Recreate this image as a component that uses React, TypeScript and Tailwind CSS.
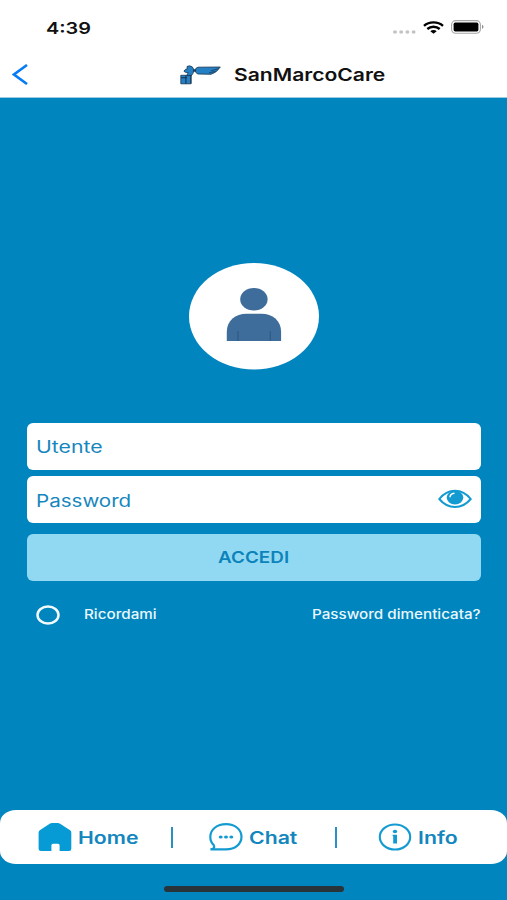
import React, { useState } from "react";

const Label = ({ box, className, children }: { box: string; className: string; children: string }) => (
  <span className={`block shrink-0 whitespace-nowrap ${box}`}>
    <span className={`block w-max origin-left ${className}`}>{children}</span>
  </span>
);

const StatusBar = () => (
  <div className="flex h-[54px] items-center justify-between pl-[46px] pr-[23.5px] text-[#111]">
    <Label box="w-[46px] pt-px" className="scale-x-[1.24] text-[16px] font-semibold">
      4:39
    </Label>
    <div className="flex items-center">
      <svg className="mt-[9px] mr-[7px] h-[4px] w-[23px]" viewBox="0 0 23 4" fill="#c4c4c4">
        <ellipse cx="2" cy="2" rx="2" ry="1.7" />
        <ellipse cx="8.2" cy="2" rx="2" ry="1.7" />
        <ellipse cx="14.4" cy="2" rx="2" ry="1.7" />
        <ellipse cx="20.6" cy="2" rx="2" ry="1.7" />
      </svg>
      <svg
        className="mr-[7px] h-[13px] w-[21px]"
        viewBox="0 0 21 13"
        fill="none"
        stroke="#000"
        strokeWidth="2.4">
        <path d="M1 4.8C6.2 0.2 14.8 0.2 20 4.8" />
        <path d="M4.3 8C7.8 5 13.2 5 16.7 8" />
        <path d="M7.3 10.2C9 8.7 12 8.7 13.7 10.2L10.5 12.8Z" fill="#000" stroke="none" />
      </svg>
      <svg className="h-[14px] w-[33px]" viewBox="0 0 33 14">
        <rect x="0.6" y="0.6" width="28.8" height="12.6" rx="4" fill="#fff" stroke="#a6a6a6" strokeWidth="1.1" />
        <rect x="2.6" y="2.6" width="24.8" height="8.8" rx="1.6" fill="#000" />
        <path d="M31 4.8C33 5.6 33 8 31 8.8Z" fill="#8f8f8f" />
      </svg>
    </div>
  </div>
);

const Logo = () => (
  <svg className="mb-[2px] h-[20px] w-[41px]" viewBox="0 0 41 20" fill="#247fc4" stroke="#17334e" strokeWidth="0.8">
    <path d="M0.8 10.3H10.8V18.8H0.8Z" />
    <path d="M3.9 6.2L5.6 4.3L7.2 4L7 1.5L9.5 0.8L12.2 1.8L13.7 4.2L13.3 7.8L11.5 10.5H6.8L8.2 7.6L5.4 7.3Z" />
    <path d="M5.9 10.5V18.8M1 12.8H7M11 10V18.8" fill="none" strokeWidth="1.1" />
    <path d="M13.3 5.5H16" strokeWidth="2.4" />
    <path d="M15.8 3.4L18 2.2L40.3 2L38 4.8L36.5 6.4L34 7.9L31 9.3L17.5 9L15.4 6.8Z" />
    <path d="M31 5.8L38.5 3.7M29 7.8L35.5 6.4" fill="none" strokeWidth="0.7" />
  </svg>
);

const Header = () => (
  <header className="h-[98px] border-b border-[#9fcbe1] bg-white">
    <StatusBar />
    <div className="flex h-[43px] items-center">
      <svg className="mb-[2px] ml-[12px] h-[21px] w-[17px]" viewBox="0 0 17 21" fill="none" stroke="#087cf7" strokeWidth="2.6">
        <path d="M15 1L2 10.5L15 20" />
      </svg>
      <div className="ml-[150.5px] flex items-center">
        <Logo />
        <Label box="ml-[13px] w-[152px] pt-px" className="scale-x-[1.24] text-[17px] font-semibold text-[#111]">
          SanMarcoCare
        </Label>
      </div>
    </div>
  </header>
);

const Avatar = () => (
  <svg className="mx-auto block h-[107px] w-[130px]" viewBox="0 0 130 107">
    <ellipse cx="65" cy="53.3" rx="65" ry="53.3" fill="#fff" />
    <g fill="#3f6d9b">
      <ellipse cx="64.9" cy="36.3" rx="13.7" ry="11.3" />
      <path d="M37.8 78V68.7C37.8 57.7 46.5 50.8 57.5 50.8H72.5C83.5 50.8 92.1 57.7 92.1 68.7V78Z" />
    </g>
    <path d="M49 68V78M81.2 68V78" stroke="#28577f" strokeWidth="1" />
  </svg>
);

const EyeIcon = () => (
  <svg className="h-[20px] w-[34px]" viewBox="0 0 34 20">
    <path
      d="M1.3 10C5.5 4.6 10.5 1.7 17 1.7S28.5 4.6 32.7 10C28.5 15.1 23.5 18 17 18S5.5 15.1 1.3 10Z"
      fill="#fff"
      stroke="#139bd1"
      strokeWidth="2"
    />
    <ellipse cx="17" cy="8.6" rx="8.3" ry="6.8" fill="#139bd1" />
    <path d="M12 8.3C12 5.9 13.8 4.5 16.5 4.2" fill="none" stroke="#fff" strokeWidth="1.5" />
  </svg>
);

const HomeIcon = () => (
  <svg className="h-[28px] w-[34px]" viewBox="0 0 34 28" fill="#079bd5">
    <path d="M1.8 7.2L11.3 0.9Q12.6 0 14.2 0H19.6Q21.2 0 22.5 0.9L32.1 7.2Q33.3 8.1 33.3 9.8V25.8Q33.3 28 31 28H21.6V22.3Q21.6 20.8 20 20.8H15Q13.4 20.8 13.4 22.3V28H3Q0.6 28 0.6 25.8V9.8Q0.6 8.1 1.8 7.2Z" />
  </svg>
);

const ChatIcon = () => (
  <svg className="h-[28px] w-[34px]" viewBox="0 0 34 28" fill="none" stroke="#139bd1" strokeWidth="2.2">
    <path d="M1.5 26.4C4.8 25.8 6 24.3 4.8 22.2C2.3 20 1.3 17 1.3 13.8C1.3 6.5 8 1.2 17 1.2S32.5 6.5 32.5 13.8S26 26.4 17 26.4Z" />
    <g fill="#139bd1" stroke="none">
      <ellipse cx="11.7" cy="14" rx="2" ry="1.6" />
      <ellipse cx="17" cy="14" rx="2" ry="1.6" />
      <ellipse cx="22.3" cy="14" rx="2" ry="1.6" />
    </g>
  </svg>
);

const InfoIcon = () => (
  <svg className="h-[28px] w-[34px]" viewBox="0 0 34 28" fill="none" stroke="#139bd1" strokeWidth="2.1">
    <ellipse cx="17" cy="14" rx="15.2" ry="12.5" />
    <ellipse cx="17" cy="8.5" rx="2.2" ry="1.7" fill="#139bd1" stroke="none" />
    <path d="M14.6 11.8H19V20.4H15.2V13.2H14.6Z" fill="#139bd1" stroke="none" />
  </svg>
);

const App = () => {
  const [remember, setRemember] = useState(false);

  return (
    <div className="flex h-[900px] w-[507px] flex-col overflow-hidden bg-[#0085bf] font-['Inter',sans-serif]">
      <Header />
      <main className="flex flex-1 flex-col px-[26.5px] pt-[165px]">
        <Avatar />
        <div className="mt-[52.5px] flex h-[47px] items-center rounded-[6px] bg-white pl-[9px] text-[#1686bd]">
          <Label box="w-[68px] pt-[3px]" className="scale-x-[1.25] text-[17px]">
            Utente
          </Label>
        </div>
        <div className="mt-[6.5px] flex h-[46.5px] items-center justify-between rounded-[6px] bg-white pr-[9px] pl-[9px] text-[#1686bd]">
          <Label box="w-[96px] pt-[4px]" className="scale-x-[1.21] text-[17px]">
            Password
          </Label>
          <EyeIcon />
        </div>
        <button className="mt-[11px] flex h-[47px] items-center justify-center rounded-[6px] bg-[#91d9f2] text-[#0c83bb]">
          <Label box="w-[71px]" className="scale-x-[1.18] text-[16px] font-semibold">
            ACCEDI
          </Label>
        </button>
        <div className="mt-[24px] flex h-[20px] items-center text-[#e9f7fc]">
          <button onClick={() => setRemember(!remember)} className="ml-[9px]">
            <svg className="block h-[20px] w-[24px]" viewBox="0 0 24 20">
              <ellipse
                cx="12"
                cy="10"
                rx="10.5"
                ry="8.5"
                fill={remember ? "#fff" : "none"}
                stroke="#f2fafd"
                strokeWidth="2.5"
              />
            </svg>
          </button>
          <Label box="ml-[24.5px] w-[73px] pt-px" className="scale-x-[1.17] text-[13px] font-medium">
            Ricordami
          </Label>
          <Label box="ml-auto w-[169px] pt-px" className="scale-x-[1.17] text-[13px] font-medium">
            Password dimenticata?
          </Label>
        </div>
      </main>
      <nav className="mb-[22px] flex h-[54px] shrink-0 items-center rounded-[16px/13px] bg-white pl-[38px] text-[#1386be]">
        <HomeIcon />
        <Label box="ml-[6px] w-[62px] pt-[3px]" className="scale-x-[1.25] text-[17px] font-semibold">
          Home
        </Label>
        <div className="ml-[31px] h-[21px] w-[1.5px] bg-[#2a8fc2]" />
        <div className="ml-[36px] flex items-center">
          <ChatIcon />
          <Label box="ml-[6px] w-[50px] pt-[3px]" className="scale-x-[1.25] text-[17px] font-semibold">
            Chat
          </Label>
        </div>
        <div className="ml-[36.5px] h-[21px] w-[1.5px] bg-[#2a8fc2]" />
        <div className="ml-[41px] flex items-center">
          <InfoIcon />
          <Label box="ml-[6px] w-[40px] pt-[3px]" className="scale-x-[1.25] text-[17px] font-semibold">
            Info
          </Label>
        </div>
      </nav>
      <div className="mx-auto mb-[8.5px] h-[5.5px] w-[180px] shrink-0 rounded-full bg-[#29343a]" />
    </div>
  );
};

export default App;
